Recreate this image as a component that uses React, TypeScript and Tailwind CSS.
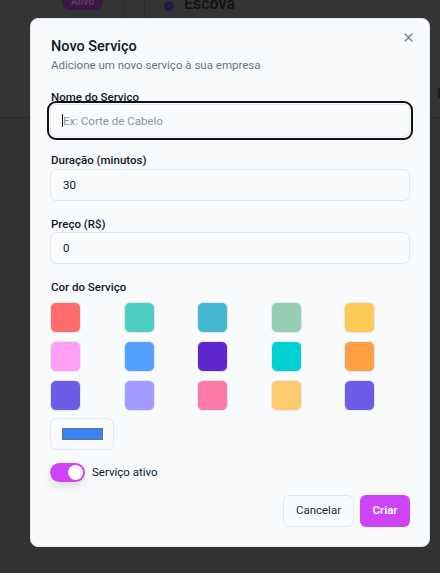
import React from "react";

const colors = [
  "#ff6b6b", "#4ecdc4", "#45b7d1", "#96ceb4", "#feca57",
  "#ff9ff3", "#54a0ff", "#5f27cd", "#00d2d3", "#ff9f43",
  "#6c5ce7", "#a29bfe", "#fd79a8", "#fdcb6e", "#6c5ce7",
];

export default function App() {
  return (
    <div
      className="relative w-[440px] h-[573px] overflow-hidden bg-[#323232]"
      style={{ fontFamily: 'Roboto, "Noto Sans", sans-serif' }}
    >
      {/* background page (dimmed) */}
      <div className="h-[118px] border-b border-[#2a2a2a] bg-[#343434] flex items-start">
        <div className="w-[62px]" />
        <div className="h-[10px] w-[41px] rounded-b-[8px] bg-[#3b1747] text-[10px] leading-[4px] text-[#5e3a6c] text-center font-semibold overflow-hidden">Ativo</div>
        <div className="ml-[20px] w-px h-[18px] bg-[#2c2c2c]" />
        <div className="ml-[20px] w-px h-[18px] bg-[#2c2c2c]" />
        <div className="ml-[19px] mt-[-4px] flex items-center gap-[10px]">
          <div className="w-[10px] h-[10px] rounded-full bg-[#231b45] mt-[4px]" />
          <div className="text-[16px] leading-[16px] font-semibold text-[#141414]">Escova</div>
        </div>
        <div className="flex-1" />
        <div className="mt-[88px] w-[2px] h-[10px] bg-[#1c1c1c]" />
      </div>

      {/* modal */}
      <div className="absolute left-[30px] top-[18px] w-[400px] h-[529px] rounded-[8px] bg-[#f8fafc] border border-[#e2e8f0] px-[19px] pt-[18px] text-[#0f172a]">
        <button className="absolute right-[16px] top-[14px] text-[#64748b]">
          <svg width="9" height="9" viewBox="0 0 9 9" fill="none" stroke="currentColor" strokeWidth="1.2" strokeLinecap="round">
            <path d="M1 1L8 8M8 1L1 8" />
          </svg>
        </button>
        <div className="pl-[1px] text-[14.5px] leading-[20px] font-medium">Novo Serviço</div>
        <div className="pl-[1px] text-[11.5px] leading-[16px] text-[#64748b]">Adicione um novo serviço à sua empresa</div>

        <div className="mt-[18px] flex flex-col gap-[17px]">
          <div className="flex flex-col gap-[1px]">
            <label className="pl-[1px] text-[11.5px] leading-[12px] font-medium">Nome do Servico</label>
            <div className="relative">
              <input
                readOnly
                placeholder="Ex: Corte de Cabelo"
                className="w-full h-[33px] rounded-[6px] border border-[#e2e8f0] bg-[#f8fafc] px-[12px] text-[11.5px] placeholder:text-[#8a94a6] outline-none ring-2 ring-[#111111] ring-offset-1 ring-offset-white"
              />
              <span className="absolute left-[12px] top-[10px] w-px h-[13px] bg-[#111]" />
            </div>
          </div>
          <div className="flex flex-col gap-[3px]">
            <label className="pl-[1px] text-[11.5px] leading-[12px] font-medium">Duração (minutos)</label>
            <input
              readOnly
              value="30"
              className="w-full h-[32px] rounded-[6px] border border-[#e2e8f0] bg-[#f8fafc] px-[12px] text-[11.5px] outline-none"
            />
          </div>
          <div className="flex flex-col gap-[2px]">
            <label className="pl-[1px] text-[11.5px] leading-[12px] font-medium">Preço (R$)</label>
            <input
              readOnly
              value="0"
              className="w-full h-[32px] rounded-[6px] border border-[#e2e8f0] bg-[#f8fafc] px-[12px] text-[11.5px] outline-none"
            />
          </div>
          <div className="flex flex-col">
            <label className="pl-[1px] text-[11.5px] leading-[12px] font-medium">Cor do Serviço</label>
            <div className="mt-[9px] grid grid-cols-5 gap-x-[8px] gap-y-[8px]">
              {colors.map((c, i) => (
                <div
                  key={i}
                  className="w-[31px] h-[31px] rounded-[6px] border border-[#e2e8f0]"
                  style={{ backgroundColor: c }}
                />
              ))}
            </div>
            <div className="mt-[7px] w-[64px] h-[32px] rounded-[6px] border border-[#e2e8f0] bg-[#f8fafc] flex items-center justify-center">
              <div className="w-[41px] h-[12px] bg-[#3b82f6] border border-[#6b7280]" />
            </div>
          </div>
        </div>

        <div className="mt-[13px] flex items-center gap-[7px]">
          <div className="w-[35px] h-[19px] rounded-full bg-[#cc44f5] flex items-center justify-end pr-[2px] shadow-[0_4px_8px_rgba(0,0,0,0.12)]">
            <div className="w-[15px] h-[15px] rounded-full bg-white" />
          </div>
          <span className="text-[11.5px]">Serviço ativo</span>
        </div>

        <div className="mt-[13px] flex justify-end gap-[6px]">
          <button className="h-[32px] w-[71px] rounded-[6px] border border-[#e2e8f0] bg-[#f8fafc] text-[11.5px] text-[#1e293b]">Cancelar</button>
          <button className="h-[32px] w-[50px] rounded-[6px] bg-[#cc44f5] text-[11.5px] font-semibold text-white">Criar</button>
        </div>
      </div>
    </div>
  );
}
